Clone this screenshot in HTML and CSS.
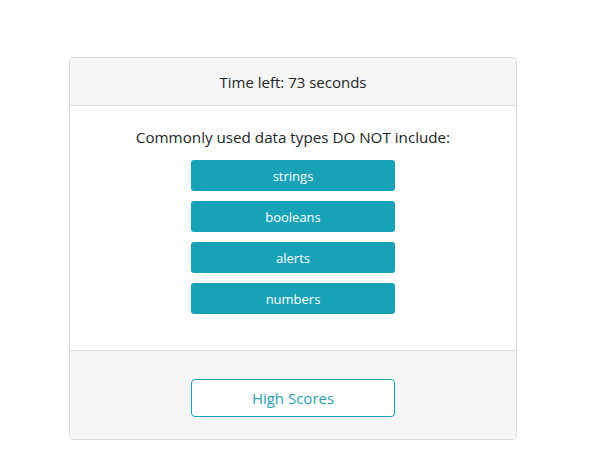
FILE: index.html
```html
<!DOCTYPE html>
<html>
<head>
<meta charset="utf-8">
<link rel="stylesheet" href="styles.css">
</head>
<body>
<div class="card">
  <div class="card-header">Time left: 73 seconds</div>
  <div class="card-body">
    <p class="question">Commonly used data types DO NOT include:</p>
    <div class="choices">
      <button class="choice">strings</button>
      <button class="choice">booleans</button>
      <button class="choice">alerts</button>
      <button class="choice">numbers</button>
    </div>
  </div>
  <div class="card-footer">
    <button class="scores">High Scores</button>
  </div>
</div>
</body>
</html>
```

FILE: styles.css
```css
html, body {
  margin: 0;
  padding: 0;
  background: #fff;
}
body {
  font-family: "Open Sans", "Noto Sans", sans-serif;
  color: #212529;
}
.card {
  margin: 57px 0 0 69px;
  width: 448px;
  box-sizing: border-box;
  border: 1px solid #dcdcdc;
  border-radius: 4px;
  overflow: hidden;
}
.card-header {
  height: 48px;
  box-sizing: border-box;
  background: #f6f6f6;
  border-bottom: 1px solid #dcdcdc;
  display: flex;
  align-items: center;
  justify-content: center;
  font-size: 15px;
}
.card-body {
  height: 245px;
  box-sizing: border-box;
  border-bottom: 1px solid #dcdcdc;
  padding-top: 20px;
  display: flex;
  flex-direction: column;
  align-items: center;
}
.question {
  margin: 0;
  font-size: 15.2px;
  line-height: 22px;
}
.choices {
  margin-top: 12px;
  display: flex;
  flex-direction: column;
  gap: 10px;
}
.choice {
  width: 204px;
  height: 31px;
  border: none;
  border-radius: 3px;
  background: #17a2b8;
  color: #fff;
  font-family: inherit;
  font-size: 13px;
  padding: 0;
}
.card-footer {
  height: 88px;
  box-sizing: border-box;
  background: #f6f6f6;
  display: flex;
  justify-content: center;
  padding-top: 28px;
}
.scores {
  width: 204px;
  height: 38px;
  border: 1px solid #17a2b8;
  border-radius: 4px;
  background: #fff;
  color: #2b9fb2;
  font-family: inherit;
  font-size: 15px;
  padding: 0;
}
```
